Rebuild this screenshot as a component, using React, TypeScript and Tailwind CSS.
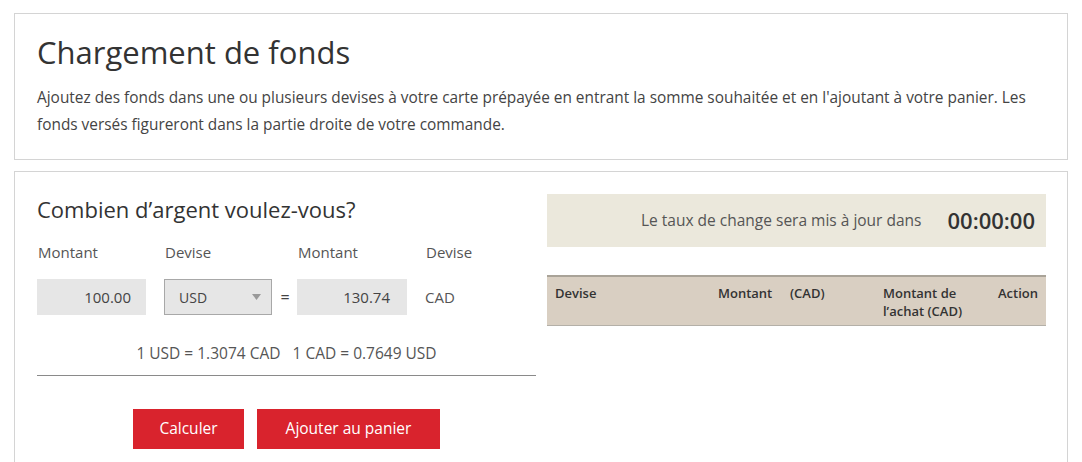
export default function App() {
  return (
    <div className="min-h-screen bg-white px-[14px] pt-[13px] font-['Open_Sans',sans-serif] text-[#333]">
      <section className="border border-[#d4d4d4] px-[22px] pt-[20px] pb-[21px]">
        <h1 className="text-[31px] leading-[36px] font-normal text-[#333]">Chargement de fonds</h1>
        <p className="mt-[14px] text-[15.4px] leading-[27px] text-[#444]">
          Ajoutez des fonds dans une ou plusieurs devises à votre carte prépayée en entrant la somme souhaitée et en
          l'ajoutant à votre panier. Les fonds versés figureront dans la partie droite de votre commande.
        </p>
      </section>

      <section className="mt-[11px] border border-[#d4d4d4] px-[22px] pt-[22px] pb-[40px]">
        <div className="grid grid-cols-[499px_499px] gap-[11px]">
          <div>
            <h2 className="text-[22px] leading-[30px] text-[#333]">Combien d’argent voulez-vous?</h2>
            <div className="mt-[18px] grid grid-cols-[127px_133px_128px_auto] pl-px text-[15px] leading-[20px] text-[#555]">
              <span>Montant</span>
              <span>Devise</span>
              <span>Montant</span>
              <span>Devise</span>
            </div>
            <div className="mt-[17px] flex items-center text-[#444]">
              <div className="h-[36px] w-[109px] bg-[#e6e6e6] pr-[15px] text-right text-[15px] leading-[36px]">100.00</div>
              <div className="ml-[18px] flex h-[36px] w-[108px] items-center justify-between border border-[#a8a8a8] bg-[#e6e6e6] pl-[14px] pr-[10px] text-[14px]">
                <span>USD</span>
                <svg width="9" height="6" viewBox="0 0 9 6">
                  <path d="M0 0h9L4.5 6z" fill="#999" />
                </svg>
              </div>
              <div className="w-[25px] pl-px text-center text-[16px]">=</div>
              <div className="h-[36px] w-[110px] bg-[#e6e6e6] pr-[17px] text-right text-[15px] leading-[36px]">130.74</div>
              <span className="ml-[18px] text-[15px] text-[#555]">CAD</span>
            </div>
            <div className="mt-[28px] text-center text-[15.5px] leading-[20px] text-[#555]">
              1 USD = 1.3074 CAD&nbsp;&nbsp; 1 CAD = 0.7649 USD
            </div>
            <div className="mt-[12px] border-t border-[#8a8a8a]" />
            <div className="mt-[33px] flex justify-center gap-[13px]">
              <button className="h-[40px] w-[111px] bg-[#d9232d] text-[15.5px] text-white">Calculer</button>
              <button className="h-[40px] w-[183px] bg-[#d9232d] text-[15.5px] text-white">Ajouter au panier</button>
            </div>
          </div>

          <div>
            <div className="flex h-[53px] items-center justify-end bg-[#ebe8dc] pr-[11px]">
              <span className="text-[15.5px] text-[#555]">Le taux de change sera mis à jour dans</span>
              <span className="ml-[26px] text-[22px] font-semibold text-[#333]">00:00:00</span>
            </div>
            <div className="mt-[28px] grid h-[51px] grid-cols-[171px_72px_93px_115px_auto] border-t-2 border-b border-t-[#a9a398] border-b-[#b4b0a8] bg-[#d9cfc2] pt-[7px] text-[13px] leading-[18px] font-semibold text-[#333]">
              <span className="pl-[8px]">Devise</span>
              <span>Montant</span>
              <span>(CAD)</span>
              <span>
                Montant de
                <br />
                l’achat (CAD)
              </span>
              <span>Action</span>
            </div>
          </div>
        </div>
      </section>
    </div>
  );
}
